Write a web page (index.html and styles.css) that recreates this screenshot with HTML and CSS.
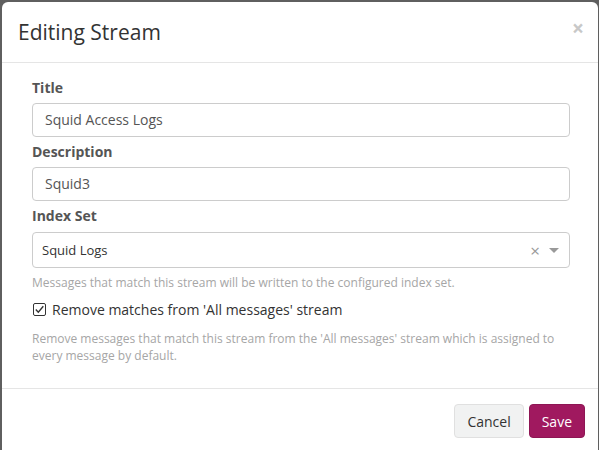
FILE: index.html
```html
<!DOCTYPE html>
<html>
<head>
<meta charset="utf-8">
<link rel="stylesheet" href="styles.css">
</head>
<body>
<div class="modal">
  <div class="modal-header">
    <h4 class="modal-title">Editing Stream</h4>
    <span class="close">×</span>
  </div>
  <div class="modal-body">
    <div class="form-group">
      <label class="label">Title</label>
      <div class="input">Squid Access Logs</div>
    </div>
    <div class="form-group">
      <label class="label">Description</label>
      <div class="input">Squid3</div>
    </div>
    <div class="form-group">
      <label class="label">Index Set</label>
      <div class="select">
        <span class="select-value">Squid Logs</span>
        <span class="select-clear">×</span>
        <span class="select-caret"></span>
      </div>
      <div class="help">Messages that match this stream will be written to the configured index set.</div>
    </div>
    <div class="checkbox-row">
      <span class="checkbox"><svg width="11" height="11" viewBox="0 0 11 11"><path d="M1.8 5.6 L4.3 8.2 L9.3 2.3" fill="none" stroke="#333" stroke-width="1.4"/></svg></span>
      <span class="checkbox-label">Remove matches from 'All messages' stream</span>
    </div>
    <div class="help help-block">Remove messages that match this stream from the 'All messages' stream which is assigned to every message by default.</div>
  </div>
  <div class="modal-footer">
    <button class="btn btn-default">Cancel</button>
    <button class="btn btn-primary">Save</button>
  </div>
</div>
</body>
</html>
```
FILE: styles.css
```css
html, body {
  margin: 0;
  height: 100%;
  overflow: hidden;
}
body {
  background: #5f5f5f;
  padding: 2px 1px 0 2px;
  box-sizing: border-box;
  font-family: "Open Sans", "DejaVu Sans", sans-serif;
  color: #333;
}
.modal {
  background: #fff;
  border-radius: 6px 6px 0 0;
  height: 460px;
}
.modal-header {
  display: flex;
  align-items: center;
  justify-content: space-between;
  padding: 0 16px;
  height: 60px;
  border-bottom: 1px solid #e5e5e5;
}
.modal-title {
  margin: 0;
  font-size: 21px;
  font-weight: 400;
  color: #333;
}
.close {
  font-size: 21px;
  font-weight: 700;
  color: #c8c8c8;
  margin-right: -2px;
  margin-top: -8px;
  line-height: 1;
}
.modal-body {
  padding: 15px 28px 24px 30px;
  border-bottom: 1px solid #e5e5e5;
}
.form-group {
  margin-bottom: 5px;
}
.label {
  display: block;
  font-size: 14px;
  font-weight: 700;
  line-height: 20px;
  color: #555;
  margin-bottom: 5px;
}
.input {
  height: 34px;
  box-sizing: border-box;
  border: 1px solid #ccc;
  border-radius: 4px;
  padding: 0 12px;
  font-size: 14px;
  line-height: 32px;
  color: #555;
}
.select {
  display: flex;
  align-items: center;
  height: 36px;
  box-sizing: border-box;
  border: 1px solid #ccc;
  border-radius: 4px;
  padding: 0 10px 0 9px;
  margin-top: 6px;
  font-size: 13px;
  color: #333;
}
.select-value {
  flex: 1;
}
.select-clear {
  color: #999;
  font-size: 17px;
  margin-right: 9px;
}
.select-caret {
  width: 0;
  height: 0;
  border-left: 5px solid transparent;
  border-right: 5px solid transparent;
  border-top: 5px solid #999;
  margin-top: 1px;
}
.help {
  font-size: 12px;
  line-height: 17px;
  color: #a6a6a6;
  margin-top: 6px;
}
.checkbox-row {
  display: flex;
  align-items: center;
  margin-top: 8px;
  height: 20px;
}
.checkbox {
  width: 13px;
  height: 13px;
  box-sizing: border-box;
  border: 1px solid #333;
  border-radius: 2px;
  display: flex;
  align-items: center;
  justify-content: center;
  margin-left: 1px;
  margin-right: 6px;
}
.checkbox svg {
  display: block;
}
.checkbox-label {
  font-size: 14px;
  color: #333;
}
.help-block {
  margin-top: 11px;
  padding-right: 10px;
}
.modal-footer {
  display: flex;
  justify-content: flex-end;
  gap: 5px;
  padding: 15px 13px 15px 15px;
}
.btn {
  height: 34px;
  box-sizing: border-box;
  font-family: "Open Sans", "DejaVu Sans", sans-serif;
  font-size: 14px;
  border-radius: 4px;
  padding: 0 12px;
  cursor: pointer;
}
.btn-default {
  background: #f1f2f2;
  border: 1px solid #e0e0e0;
  color: #333;
}
.btn-primary {
  background: #a0195f;
  border: 1px solid #8e1654;
  color: #fff;
}
```
